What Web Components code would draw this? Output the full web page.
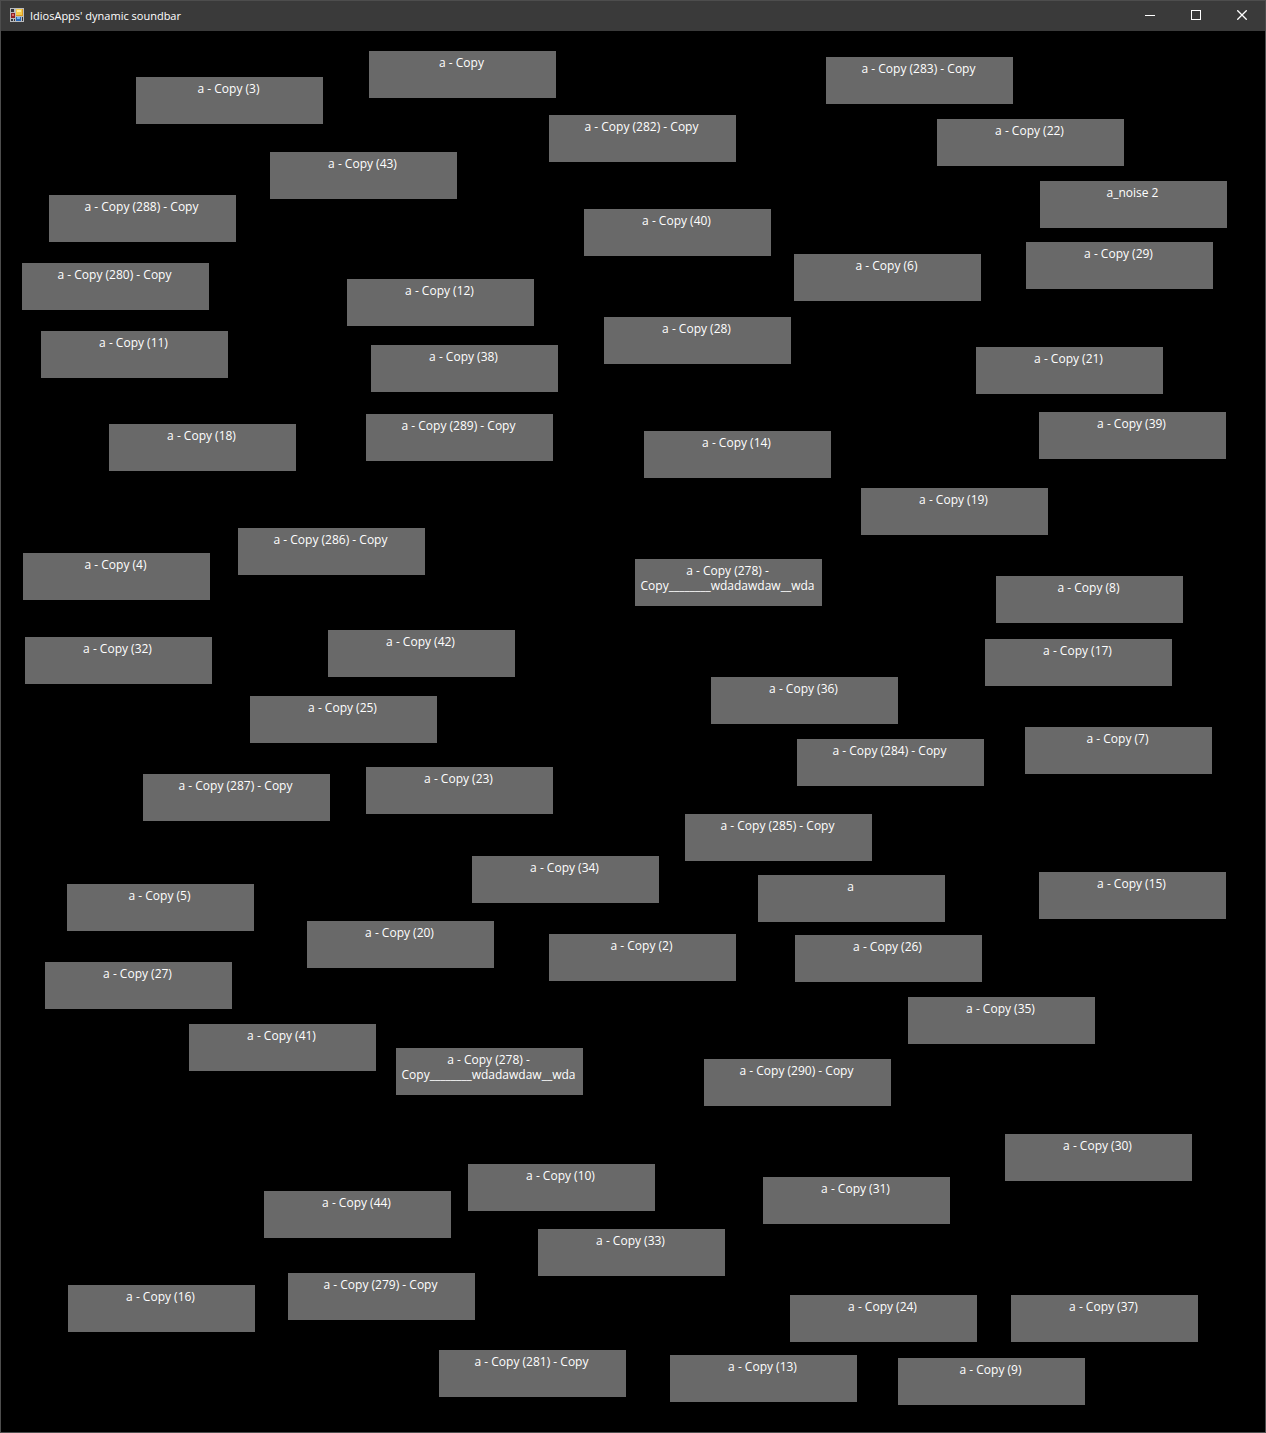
<!DOCTYPE html>
<html lang="en">
<head>
<meta charset="utf-8">
<title>IdiosApps' dynamic soundbar</title>
<style>
html, body { margin: 0; height: 100%; background: #000; }
body { font-family: "Open Sans", "Noto Sans", sans-serif; font-size: 12px; line-height: 15px; color: #fff; }
</style>
</head>
<body>
<app-window>
  <title-bar slot="bar">IdiosApps' dynamic soundbar</title-bar>
  <sound-board></sound-board>
</app-window>

<script>
class AppWindow extends HTMLElement {
  constructor() {
    super();
    this.attachShadow({ mode: 'open' }).innerHTML = `
      <style>
        :host { display: flex; flex-direction: column; box-sizing: border-box; min-height: 100vh; border: 1px solid #4d4d4d; background: #000; }
        main { flex: 1; display: flex; }
        ::slotted(sound-board) { flex: 1; }
      </style>
      <slot name="bar"></slot>
      <main><slot></slot></main>`;
  }
}

class TitleBar extends HTMLElement {
  constructor() {
    super();
    this.attachShadow({ mode: 'open' }).innerHTML = `
      <style>
        :host { display: block; background: #3a3a3a; }
        header { display: flex; align-items: center; height: 30px; padding-left: 9px; gap: 6px; }
        header > svg { margin-bottom: 2px; }
        svg { display: block; }
        h1 { flex: 1; margin: 0; padding-bottom: 2px; font: inherit; font-size: 11px; }
        nav { display: flex; align-self: stretch; }
        button { display: flex; align-items: center; justify-content: center; width: 46px; padding: 0 0 2px; border: 0; background: none; color: #fff; }
        button:hover { background: #555; }
      </style>
      <header>
        <svg width="14" height="14" viewBox="0 0 14 14" shape-rendering="crispEdges" aria-hidden="true">
          <path fill="#b9bbbe" d="M0 0h14v14H0z"/>
          <path fill="#33353b" d="M1 1h3v3H1zM1 11h2v2H1zM4 11h1v2H4zM12 9h1v4h-1z"/>
          <path fill="#8e2226" d="M1 5h4v5H1z"/>
          <path fill="#dc6a68" d="M2 6h2v2H2z"/>
          <path fill="#d99a20" d="M6 1h7v7H6z"/>
          <path fill="#f5cb4c" d="M6 1h6v6H6z"/>
          <path fill="#fdeb9a" d="M7 2h4v2H7z"/>
          <path fill="#2866b4" d="M6 9h5v4H6z"/>
          <path fill="#78b3ec" d="M7 9h3v2H7z"/>
        </svg>
        <h1><slot></slot></h1>
        <nav aria-label="Window controls">
          <button type="button" aria-label="Minimize"><svg width="10" height="10" shape-rendering="crispEdges"><path d="M0 5h10v1H0z" fill="#fff"/></svg></button>
          <button type="button" aria-label="Maximize"><svg width="10" height="10" shape-rendering="crispEdges"><path d="M.5 .5h9v9h-9z" fill="none" stroke="#fff"/></svg></button>
          <button type="button" aria-label="Close"><svg width="10" height="10"><path d="M.3 .3l9.4 9.4M9.7 .3L.3 9.7" fill="none" stroke="#fff" stroke-width="1.3"/></svg></button>
        </nav>
      </header>`;
  }
}

class SoundTile extends HTMLElement {
  constructor() {
    super();
    this.attachShadow({ mode: 'open' }).innerHTML = `
      <style>
        :host { display: block; width: 187px; height: 47px; }
        button { display: flex; justify-content: center; align-items: flex-start; box-sizing: border-box; width: 100%; height: 100%;
          margin: 0; padding: 4px 6px 0 4px; border: 0; background: #696969; color: #fff; font: inherit; text-align: center; cursor: pointer; }
        button:hover { background: #787878; }
      </style>
      <button type="button"><span><slot></slot></span></button>`;
  }
}

const LONG = 'a - Copy (278) - Copy________wdadawdaw__wda';
const SOUNDS = [
  [368, 20, 'a - Copy'], [825, 26, 'a - Copy (283) - Copy'], [135, 46, 'a - Copy (3)'],
  [548, 84, 'a - Copy (282) - Copy'], [936, 88, 'a - Copy (22)'], [269, 121, 'a - Copy (43)'],
  [1039, 150, 'a_noise 2'], [48, 164, 'a - Copy (288) - Copy'], [583, 178, 'a - Copy (40)'],
  [1025, 211, 'a - Copy (29)'], [793, 223, 'a - Copy (6)'], [21, 232, 'a - Copy (280) - Copy'],
  [346, 248, 'a - Copy (12)'], [603, 286, 'a - Copy (28)'], [40, 300, 'a - Copy (11)'],
  [370, 314, 'a - Copy (38)'], [975, 316, 'a - Copy (21)'], [1038, 381, 'a - Copy (39)'],
  [365, 383, 'a - Copy (289) - Copy'], [108, 393, 'a - Copy (18)'], [643, 400, 'a - Copy (14)'],
  [860, 457, 'a - Copy (19)'], [237, 497, 'a - Copy (286) - Copy'], [22, 522, 'a - Copy (4)'],
  [634, 528, LONG], [995, 545, 'a - Copy (8)'], [327, 599, 'a - Copy (42)'],
  [24, 606, 'a - Copy (32)'], [984, 608, 'a - Copy (17)'], [710, 646, 'a - Copy (36)'],
  [249, 665, 'a - Copy (25)'], [1024, 696, 'a - Copy (7)'], [796, 708, 'a - Copy (284) - Copy'],
  [365, 736, 'a - Copy (23)'], [142, 743, 'a - Copy (287) - Copy'], [684, 783, 'a - Copy (285) - Copy'],
  [471, 825, 'a - Copy (34)'], [1038, 841, 'a - Copy (15)'], [757, 844, 'a'],
  [66, 853, 'a - Copy (5)'], [306, 890, 'a - Copy (20)'], [548, 903, 'a - Copy (2)'],
  [794, 904, 'a - Copy (26)'], [44, 931, 'a - Copy (27)'], [907, 966, 'a - Copy (35)'],
  [188, 993, 'a - Copy (41)'], [395, 1017, LONG], [703, 1028, 'a - Copy (290) - Copy'],
  [1004, 1103, 'a - Copy (30)'], [467, 1133, 'a - Copy (10)'], [762, 1146, 'a - Copy (31)'],
  [263, 1160, 'a - Copy (44)'], [537, 1198, 'a - Copy (33)'], [287, 1242, 'a - Copy (279) - Copy'],
  [67, 1254, 'a - Copy (16)'], [789, 1264, 'a - Copy (24)'], [1010, 1264, 'a - Copy (37)'],
  [438, 1319, 'a - Copy (281) - Copy'], [669, 1324, 'a - Copy (13)'], [897, 1327, 'a - Copy (9)']
];

class SoundBoard extends HTMLElement {
  constructor() {
    super();
    const root = this.attachShadow({ mode: 'open' });
    root.innerHTML = `
      <style>
        :host { display: block; position: relative; background: #000; }
        sound-tile { position: absolute; left: var(--x); top: var(--y); }
      </style>`;
    for (const [x, y, name] of SOUNDS) {
      const tile = document.createElement('sound-tile');
      tile.style.setProperty('--x', x + 'px');
      tile.style.setProperty('--y', y + 'px');
      tile.textContent = name;
      root.append(tile);
    }
  }
}

customElements.define('sound-tile', SoundTile);
customElements.define('sound-board', SoundBoard);
customElements.define('title-bar', TitleBar);
customElements.define('app-window', AppWindow);
</script>
</body>
</html>
